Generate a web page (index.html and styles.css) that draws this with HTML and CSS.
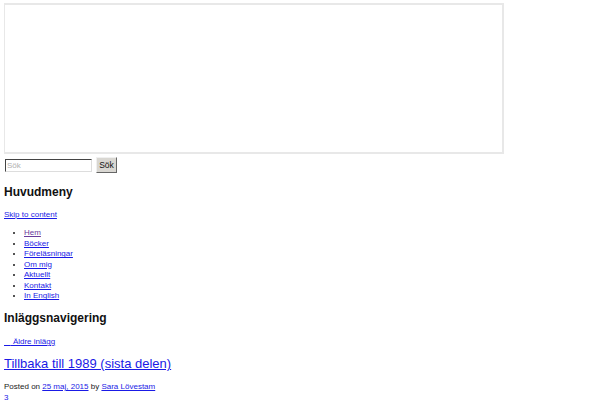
FILE: index.html
```html
<!DOCTYPE html>
<html lang="sv">
<head>
<meta charset="utf-8">
<title>Sara Lövestam</title>
<link rel="stylesheet" href="styles.css">
</head>
<body>
<div class="frame"></div>
<form class="search">
  <input class="search-field" type="text" placeholder="Sök">
  <button class="search-btn" type="button">Sök</button>
</form>
<h2 class="heading heading-menu">Huvudmeny</h2>
<a class="link skip" href="#content">Skip to content</a>
<ul class="menu">
  <li><a class="link visited" href="#">Hem</a></li>
  <li><a class="link" href="#">Böcker</a></li>
  <li><a class="link" href="#">Föreläsningar</a></li>
  <li><a class="link" href="#">Om mig</a></li>
  <li><a class="link" href="#">Aktuellt</a></li>
  <li><a class="link" href="#">Kontakt</a></li>
  <li><a class="link" href="#">In English</a></li>
</ul>
<h2 class="heading heading-nav">Inläggsnavigering</h2>
<div class="nav-prev"><a class="link" href="#"><span class="meta-nav">&nbsp;&nbsp;&nbsp;</span> Äldre inlägg</a></div>
<h1 class="entry-title"><a class="link" href="#">Tillbaka till 1989 (sista delen)</a></h1>
<div class="entry-meta">Posted on <a class="link" href="#">25 maj, 2015</a> by <a class="link" href="#">Sara Lövestam</a></div>
<div class="comments"><a class="link plain" href="#">3</a></div>
</body>
</html>
```
FILE: styles.css
```css
html, body {
  background: #ffffff;
}
body {
  margin: 3px 0 0 4px;
  font-family: "Liberation Sans", Arial, sans-serif;
  font-size: 8px;
  line-height: 10.6px;
  color: #1a1a1a;
}
.frame {
  margin-left: -1px;
  width: 497px;
  height: 147px;
  border: 2px solid #e8e8e8;
}
.search {
  display: flex;
  align-items: center;
  gap: 4px;
  margin: 3px 0 0 1px;
  height: 16px;
}
.search-field {
  box-sizing: border-box;
  width: 87px;
  height: 13px;
  margin: 0;
  padding: 0 1px;
  border: 1px solid;
  border-color: #444444 #dddddd #dddddd #444444;
  font-family: "Liberation Sans", Arial, sans-serif;
  font-size: 8px;
  color: #222222;
  background: #ffffff;
}
.search-field::placeholder {
  color: #b0b0b0;
}
.search-btn {
  box-sizing: border-box;
  width: 21px;
  height: 16px;
  margin: 0;
  padding: 0;
  border: 1px solid;
  border-color: #f0f0f0 #666666 #666666 #f0f0f0;
  background: #d9d7d2;
  font-family: "Liberation Sans", Arial, sans-serif;
  font-size: 8.5px;
  color: #111111;
}
.heading {
  font-size: 12px;
  line-height: 14px;
  font-weight: bold;
  color: #111111;
  margin: 0;
}
.heading-menu {
  margin-top: 12px;
}
.link {
  color: #1a1ae6;
  text-decoration: underline;
}
.link.visited {
  color: #6a3a9a;
}
.skip {
  display: block;
  margin-top: 11px;
  width: max-content;
}
.menu {
  margin: 7.6px 0 0;
  padding-left: 20px;
}
.menu li {
  line-height: 10.5px;
}
.heading-nav {
  margin-top: 9.4px;
}
.nav-prev {
  margin-top: 12px;
}
.entry-title {
  margin: 8.4px 0 0;
  font-size: 13px;
  line-height: 15px;
  font-weight: normal;
}
.entry-meta {
  margin-top: 11px;
}
.plain {
  text-decoration: none;
}
```
